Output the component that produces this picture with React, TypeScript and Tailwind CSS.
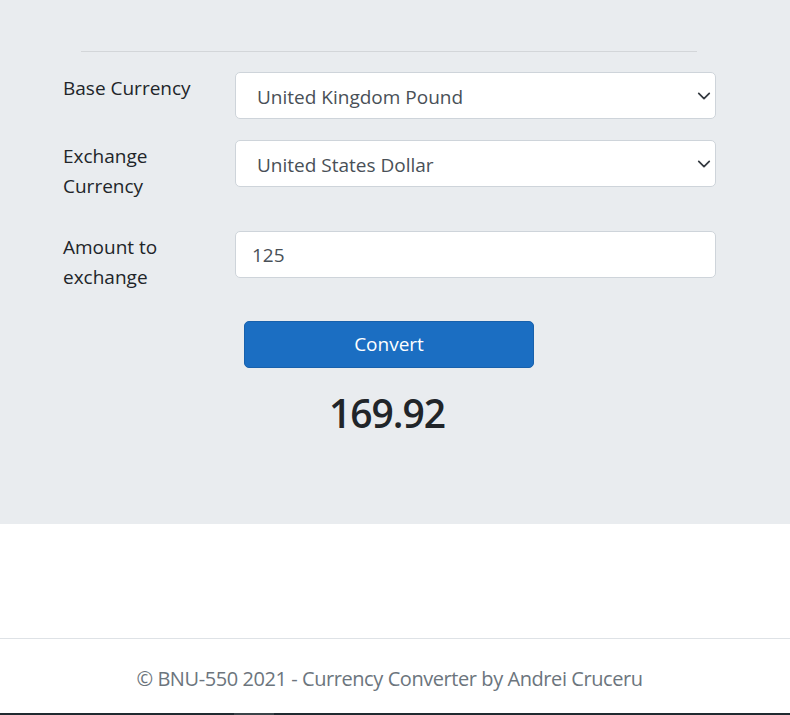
import React, { useState } from 'react';

const currencies = [
  'United Kingdom Pound',
  'United States Dollar',
  'Euro',
  'Japanese Yen',
  'Swiss Franc',
];

function Chevron() {
  return (
    <svg
      className="pointer-events-none absolute right-[5px] top-1/2 -translate-y-1/2"
      width="14"
      height="14"
      viewBox="0 0 16 16"
      fill="none"
    >
      <path
        d="M2 5l6 6 6-6"
        stroke="#343a40"
        strokeWidth="2"
        strokeLinecap="round"
        strokeLinejoin="round"
      />
    </svg>
  );
}

function CurrencySelect({ value }: { value: string }) {
  return (
    <div className="relative flex-1 self-start">
      <select
        defaultValue={value}
        className="w-full h-[47px] appearance-none bg-white border border-[#ced4da] rounded-[5px] pl-[21px] pr-10 pt-[3px] text-[19px] text-[#495057] outline-none"
      >
        {currencies.map((c) => (
          <option key={c}>{c}</option>
        ))}
      </select>
      <Chevron />
    </div>
  );
}

export default function App() {
  const [amount, setAmount] = useState('125');

  return (
    <div
      className="flex flex-col h-[715px] bg-white text-[#212529]"
      style={{ fontFamily: '"Open Sans", "Noto Sans", sans-serif' }}
    >
      {/* Converter panel */}
      <div className="h-[524px] bg-[#e9ecef] pt-[51px]">
        <div className="ml-[81px] w-[616px] border-t border-[#d3d6d9]" />

        <div className="ml-[63px] mt-[20px] w-[653px]">
          <div className="flex mb-[21px]">
            <label className="w-[172px] pt-px text-[19px] leading-[30px]">Base Currency</label>
            <CurrencySelect value="United Kingdom Pound" />
          </div>

          <div className="flex mb-[30px]">
            <label className="w-[172px] pt-px text-[19px] leading-[30px]">
              Exchange
              <br />
              Currency
            </label>
            <CurrencySelect value="United States Dollar" />
          </div>

          <div className="flex items-start">
            <label className="w-[172px] pt-px text-[19px] leading-[30px]">
              Amount to
              <br />
              exchange
            </label>
            <input
              value={amount}
              onChange={(e) => setAmount(e.target.value)}
              className="flex-1 h-[47px] bg-white border border-[#ced4da] rounded-[5px] px-[16px] text-[19px] text-[#495057] outline-none"
            />
          </div>
        </div>

        <div className="ml-[244px] w-[290px] flex flex-col items-center mt-[29px]">
          <button className="w-full h-[47px] rounded-[5px] bg-[#1b6ec2] border border-[#1861ac] text-white text-[19px]">
            Convert
          </button>
          <h2 className="mt-[21px] pr-[4px] text-[39px] leading-[48px] font-semibold text-[#212529] tracking-[-1px]">
            169.92
          </h2>
        </div>
      </div>

      {/* Spacer */}
      <div className="h-[114px] bg-white" />

      {/* Footer */}
      <footer className="flex-1 border-t border-[#dee2e6] flex items-center justify-center pt-[5px] pr-[11px]">
        <span className="text-[20px] text-[#6c757d] tracking-[-0.43px]">
          © BNU-550 2021 - Currency Converter by Andrei Cruceru
        </span>
      </footer>

      {/* Bottom strip */}
      <div className="flex h-[2px] bg-[#202a30]">
        <div className="w-[234px]" />
        <div className="w-[40px] bg-[#3b4449]" />
      </div>
    </div>
  );
}
